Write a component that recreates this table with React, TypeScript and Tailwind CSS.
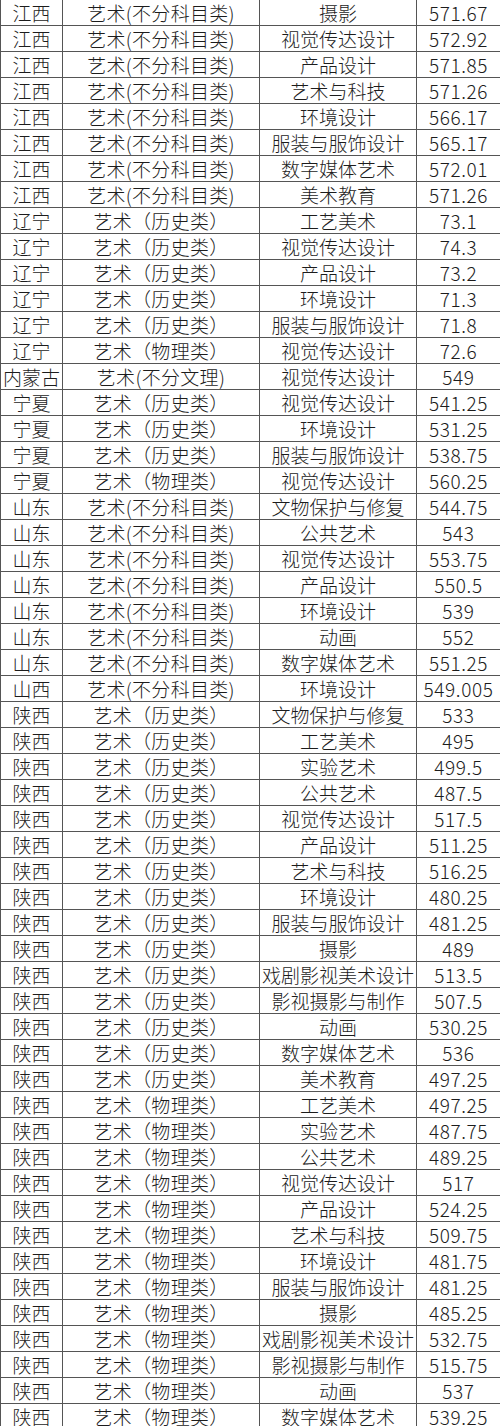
const rows: [string, string, string, string][] = [
  ["江西", "艺术(不分科目类)", "摄影", "571.67"],
  ["江西", "艺术(不分科目类)", "视觉传达设计", "572.92"],
  ["江西", "艺术(不分科目类)", "产品设计", "571.85"],
  ["江西", "艺术(不分科目类)", "艺术与科技", "571.26"],
  ["江西", "艺术(不分科目类)", "环境设计", "566.17"],
  ["江西", "艺术(不分科目类)", "服装与服饰设计", "565.17"],
  ["江西", "艺术(不分科目类)", "数字媒体艺术", "572.01"],
  ["江西", "艺术(不分科目类)", "美术教育", "571.26"],
  ["辽宁", "艺术（历史类）", "工艺美术", "73.1"],
  ["辽宁", "艺术（历史类）", "视觉传达设计", "74.3"],
  ["辽宁", "艺术（历史类）", "产品设计", "73.2"],
  ["辽宁", "艺术（历史类）", "环境设计", "71.3"],
  ["辽宁", "艺术（历史类）", "服装与服饰设计", "71.8"],
  ["辽宁", "艺术（物理类）", "视觉传达设计", "72.6"],
  ["内蒙古", "艺术(不分文理)", "视觉传达设计", "549"],
  ["宁夏", "艺术（历史类）", "视觉传达设计", "541.25"],
  ["宁夏", "艺术（历史类）", "环境设计", "531.25"],
  ["宁夏", "艺术（历史类）", "服装与服饰设计", "538.75"],
  ["宁夏", "艺术（物理类）", "视觉传达设计", "560.25"],
  ["山东", "艺术(不分科目类)", "文物保护与修复", "544.75"],
  ["山东", "艺术(不分科目类)", "公共艺术", "543"],
  ["山东", "艺术(不分科目类)", "视觉传达设计", "553.75"],
  ["山东", "艺术(不分科目类)", "产品设计", "550.5"],
  ["山东", "艺术(不分科目类)", "环境设计", "539"],
  ["山东", "艺术(不分科目类)", "动画", "552"],
  ["山东", "艺术(不分科目类)", "数字媒体艺术", "551.25"],
  ["山西", "艺术(不分科目类)", "环境设计", "549.005"],
  ["陕西", "艺术（历史类）", "文物保护与修复", "533"],
  ["陕西", "艺术（历史类）", "工艺美术", "495"],
  ["陕西", "艺术（历史类）", "实验艺术", "499.5"],
  ["陕西", "艺术（历史类）", "公共艺术", "487.5"],
  ["陕西", "艺术（历史类）", "视觉传达设计", "517.5"],
  ["陕西", "艺术（历史类）", "产品设计", "511.25"],
  ["陕西", "艺术（历史类）", "艺术与科技", "516.25"],
  ["陕西", "艺术（历史类）", "环境设计", "480.25"],
  ["陕西", "艺术（历史类）", "服装与服饰设计", "481.25"],
  ["陕西", "艺术（历史类）", "摄影", "489"],
  ["陕西", "艺术（历史类）", "戏剧影视美术设计", "513.5"],
  ["陕西", "艺术（历史类）", "影视摄影与制作", "507.5"],
  ["陕西", "艺术（历史类）", "动画", "530.25"],
  ["陕西", "艺术（历史类）", "数字媒体艺术", "536"],
  ["陕西", "艺术（历史类）", "美术教育", "497.25"],
  ["陕西", "艺术（物理类）", "工艺美术", "497.25"],
  ["陕西", "艺术（物理类）", "实验艺术", "487.75"],
  ["陕西", "艺术（物理类）", "公共艺术", "489.25"],
  ["陕西", "艺术（物理类）", "视觉传达设计", "517"],
  ["陕西", "艺术（物理类）", "产品设计", "524.25"],
  ["陕西", "艺术（物理类）", "艺术与科技", "509.75"],
  ["陕西", "艺术（物理类）", "环境设计", "481.75"],
  ["陕西", "艺术（物理类）", "服装与服饰设计", "481.25"],
  ["陕西", "艺术（物理类）", "摄影", "485.25"],
  ["陕西", "艺术（物理类）", "戏剧影视美术设计", "532.75"],
  ["陕西", "艺术（物理类）", "影视摄影与制作", "515.75"],
  ["陕西", "艺术（物理类）", "动画", "537"],
  ["陕西", "艺术（物理类）", "数字媒体艺术", "539.25"],
];

export default function App() {
  return (
    <div className="h-[1426px] w-[500px] overflow-hidden bg-white font-['Noto_Sans_CJK_SC','Noto_Sans',sans-serif] text-[19px] font-light leading-none text-[#1c1c1c]">
      {rows.map(([prov, kind, major, score], i) => (
        <div key={i} className="grid h-[26px] grid-cols-[63px_197px_157px_83px] border-b border-[#555]">
          <div className="flex items-center justify-center border-x border-[#555] whitespace-nowrap">{prov}</div>
          <div className="flex items-center justify-center border-r border-[#555] whitespace-nowrap tracking-[0.3px]">{kind}</div>
          <div className="flex items-center justify-center border-r border-[#555] whitespace-nowrap">{major}</div>
          <div className="flex items-center justify-center whitespace-nowrap tracking-[0.6px]">{score}</div>
        </div>
      ))}
    </div>
  );
}
